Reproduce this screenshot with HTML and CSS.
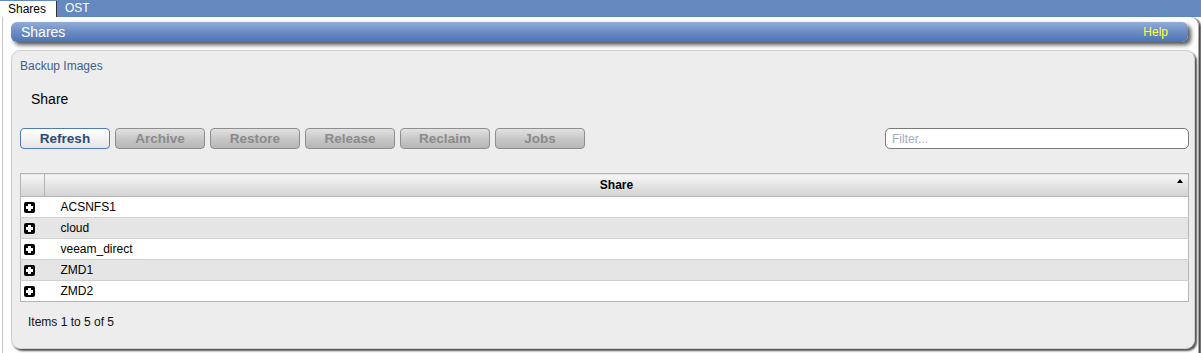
FILE: index.html
```html
<!DOCTYPE html>
<html lang="en">
<head>
  <meta charset="UTF-8" />
  <title>Shares</title>
  <link rel="stylesheet" href="styles.css">
</head>
<body>
  <div class="tabs">
    <div class="tab active">Shares</div>
    <div class="tab">OST</div>
  </div>

  <div class="page">
    <div class="titlebar">
      <span class="title">Shares</span>
      <a class="help" href="#">Help</a>
    </div>

    <div class="panel">
      <div class="crumb">Backup Images</div>
      <div class="heading">Share</div>

      <div class="toolbar">
        <button class="btn primary">Refresh</button>
        <button class="btn" disabled>Archive</button>
        <button class="btn" disabled>Restore</button>
        <button class="btn" disabled>Release</button>
        <button class="btn" disabled>Reclaim</button>
        <button class="btn" disabled>Jobs</button>
        <input class="filter" type="text" placeholder="Filter...">
      </div>

      <table class="grid">
        <thead>
          <tr>
            <th class="expand"></th>
            <th class="sorted">Share<span class="arrow"></span></th>
          </tr>
        </thead>
        <tbody>
          <tr><td class="expand"><span class="plus"></span></td><td>ACSNFS1</td></tr>
          <tr><td class="expand"><span class="plus"></span></td><td>cloud</td></tr>
          <tr><td class="expand"><span class="plus"></span></td><td>veeam_direct</td></tr>
          <tr><td class="expand"><span class="plus"></span></td><td>ZMD1</td></tr>
          <tr><td class="expand"><span class="plus"></span></td><td>ZMD2</td></tr>
        </tbody>
      </table>

      <div class="footer">Items 1 to 5 of 5</div>
    </div>
  </div>
</body>
</html>
```

FILE: styles.css
```css
html, body {
  margin: 0;
  height: 100%;
  overflow: hidden;
}

body {
  background: #fff;
  font-family: "Liberation Sans", Arial, sans-serif;
  font-size: 12px;
  color: #000;
}

.tabs {
  display: flex;
  height: 17px;
  background: #6389bf;
}

.tab {
  padding: 0 12px 0 8px;
  line-height: 17px;
  color: #fff;
  font-size: 12px;
}

.tab.active {
  margin-top: 1px;
  line-height: 16px;
  background: #fff;
  color: #000;
  padding-right: 10px;
  border-right: 1px solid #333;
}

.page {
  height: 335px;
  margin: 0 2px 0 2px;
  padding: 5px 3px 0 8px;
  border-left: 1px solid #c4c4c4;
  border-right: 1px solid #aaa;
  border-top-right-radius: 9px;
  box-shadow: 2px 1px 2px #444;
}

.titlebar {
  display: flex;
  justify-content: space-between;
  align-items: center;
  height: 20px;
  margin-right: 7px;
  padding: 0 20px 0 10px;
  border-radius: 6px;
  background: linear-gradient(#93acd6, #6f8fc6 45%, #4a74b4);
  box-shadow: 3px 3px 4px #555;
}

.title {
  color: #fff;
  font-size: 14px;
}

.help {
  color: #ffff33;
  font-size: 12px;
  text-decoration: none;
}

.panel {
  height: 297px;
  margin-top: 8px;
  padding: 0 5px 0 8px;
  background: #ededed;
  border: 1px solid #cfcfcf;
  border-radius: 9px;
  box-shadow: 2px 2px 2px #555;
}

.crumb {
  margin-top: 8px;
  line-height: 14px;
  color: #3f5d8f;
}

.heading {
  margin-top: 19px;
  padding-left: 11px;
  font-size: 14px;
  line-height: 14px;
}

.toolbar {
  display: flex;
  gap: 5px;
  margin-top: 22px;
  height: 21px;
}

.btn {
  width: 90px;
  height: 21px;
  padding: 0;
  border: 1px solid #8e8e8e;
  border-radius: 4px;
  background: linear-gradient(#e2e2e2, #c6c6c6 55%, #b7b7b7);
  color: #8a8a8a;
  font-family: inherit;
  font-size: 13.5px;
  font-weight: bold;
}

.btn.primary {
  border-color: #4f7ab6;
  background: linear-gradient(#ffffff, #f0f0f0 60%, #e6e6e6);
  color: #2b4b7c;
}

.filter {
  margin-left: auto;
  width: 304px;
  height: 21px;
  box-sizing: border-box;
  padding: 0 6px;
  border: 1px solid #7a7a7a;
  border-radius: 5px;
  font-family: inherit;
  font-size: 12px;
}

.filter::placeholder {
  color: #a4adbd;
}

.grid {
  width: 1169px;
  margin-top: 24px;
  border-collapse: collapse;
  border: 1px solid #b4b4b4;
  background: #fff;
}

.grid th {
  height: 22px;
  padding: 0;
  border: 1px solid #b4b4b4;
  background: linear-gradient(#f7f7f7, #e6e6e6 45%, #d3d3d3);
  font-weight: bold;
  font-size: 12px;
  position: relative;
}

.grid th.expand,
.grid td.expand {
  width: 20px;
  padding: 0 0 0 3px;
  text-align: left;
}

.arrow {
  position: absolute;
  right: 5px;
  top: 5px;
  border-left: 3px solid transparent;
  border-right: 3px solid transparent;
  border-bottom: 4px solid #000;
}

.grid td {
  height: 20px;
  padding: 0 0 0 16px;
  border-top: 1px solid #cfcfcf;
  line-height: 20px;
}

.grid tbody tr:nth-child(even) td {
  background: #e5e5e5;
}

.plus {
  display: block;
  width: 11px;
  height: 11px;
  border-radius: 2px;
  background:
    linear-gradient(#fff, #fff) center / 7px 3px no-repeat,
    linear-gradient(#fff, #fff) center / 3px 7px no-repeat,
    #000;
}

.footer {
  margin-top: 13px;
  padding-left: 8px;
  line-height: 14px;
  color: #111;
}
```
